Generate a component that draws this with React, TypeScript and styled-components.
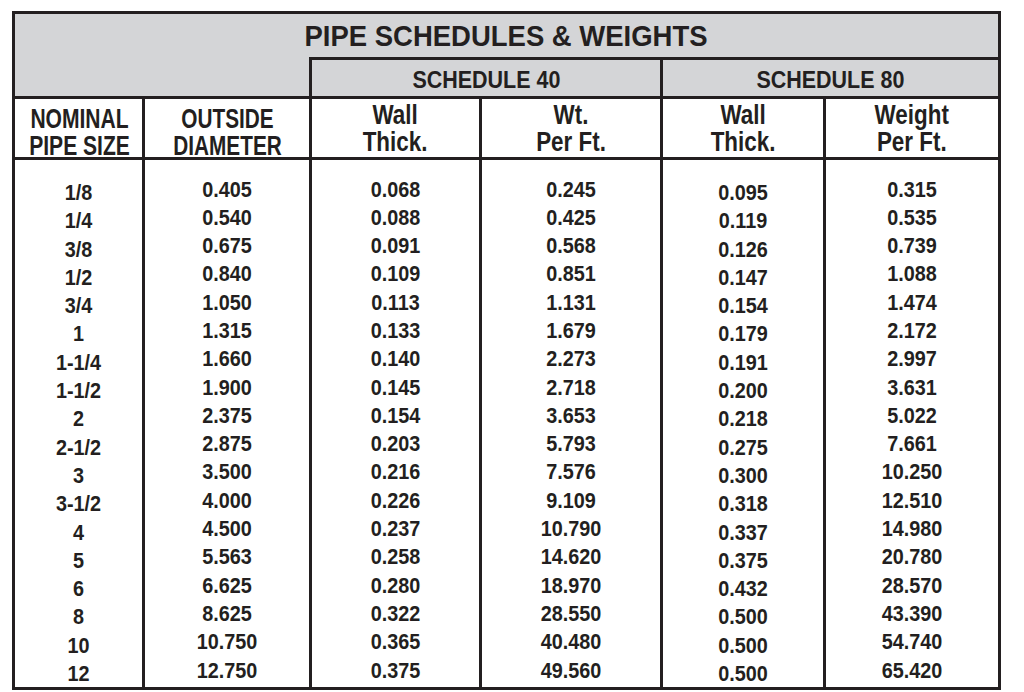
import React from "react";
import styled, { createGlobalStyle } from "styled-components";

const INK = "#231f20";
const GRAY = "#d4d5d7";

const Global = createGlobalStyle`
  html, body { margin: 0; padding: 0; background: #ffffff; }
  body { font-family: "Liberation Sans", Arial, sans-serif; color: ${INK}; }
`;

const Page = styled.div`
  padding: 11px 0 0 12px;
`;

const Table = styled.div`
  display: grid;
  grid-template-columns: 127px 164px 167px 178px 160px 172px;
  grid-template-rows: 43px 36px 58px 527px;
  gap: 3px;
  width: 983px;
  border: 3px solid ${INK};
  background: ${INK};
  font-weight: 700;
`;

const Squeeze = styled.span<{ $sx: number }>`
  display: inline-block;
  transform: scaleX(${(p) => p.$sx});
  white-space: nowrap;
`;

const TitleCell = styled.div`
  grid-column: 1 / -1;
  background: ${GRAY};
  text-align: center;
  font-size: 30px;
  line-height: 43px;
`;

const Spacer = styled.div`
  grid-column: 1 / 3;
  margin-top: -3px;
  background: ${GRAY};
`;

const ScheduleCell = styled.div`
  grid-column: span 2;
  background: ${GRAY};
  text-align: center;
  font-size: 24.5px;
  line-height: 32px;
  padding-top: 4px;
`;

const HeaderCell = styled.div<{ $top: number }>`
  background: #ffffff;
  text-align: center;
  font-size: 27px;
  line-height: 27px;
  padding-top: ${(p) => p.$top}px;
`;

const HeadLine = styled.span`
  display: block;
`;

const BodyCol = styled.div<{ $top: number }>`
  background: #ffffff;
  padding-top: ${(p) => p.$top}px;
  font-size: 22px;
  line-height: 28.3px;
`;

const ValueList = styled.div`
  display: flex;
  flex-direction: column;
  align-items: center;
  transform: scaleX(0.9);
`;

const columns: { head: [string, string]; sx: number; headTop: number; bodyTop: number; values: string[] }[] = [
  {
    head: ["NOMINAL", "PIPE SIZE"],
    sx: 0.78,
    headTop: 7,
    bodyTop: 19,
    values: ["1/8", "1/4", "3/8", "1/2", "3/4", "1", "1-1/4", "1-1/2", "2", "2-1/2", "3", "3-1/2", "4", "5", "6", "8", "10", "12"],
  },
  {
    head: ["OUTSIDE", "DIAMETER"],
    sx: 0.77,
    headTop: 7,
    bodyTop: 15.5,
    values: ["0.405", "0.540", "0.675", "0.840", "1.050", "1.315", "1.660", "1.900", "2.375", "2.875", "3.500", "4.000", "4.500", "5.563", "6.625", "8.625", "10.750", "12.750"],
  },
  {
    head: ["Wall", "Thick."],
    sx: 0.83,
    headTop: 3,
    bodyTop: 15.5,
    values: ["0.068", "0.088", "0.091", "0.109", "0.113", "0.133", "0.140", "0.145", "0.154", "0.203", "0.216", "0.226", "0.237", "0.258", "0.280", "0.322", "0.365", "0.375"],
  },
  {
    head: ["Wt.", "Per Ft."],
    sx: 0.83,
    headTop: 3,
    bodyTop: 15.5,
    values: ["0.245", "0.425", "0.568", "0.851", "1.131", "1.679", "2.273", "2.718", "3.653", "5.793", "7.576", "9.109", "10.790", "14.620", "18.970", "28.550", "40.480", "49.560"],
  },
  {
    head: ["Wall", "Thick."],
    sx: 0.83,
    headTop: 3,
    bodyTop: 19,
    values: ["0.095", "0.119", "0.126", "0.147", "0.154", "0.179", "0.191", "0.200", "0.218", "0.275", "0.300", "0.318", "0.337", "0.375", "0.432", "0.500", "0.500", "0.500"],
  },
  {
    head: ["Weight", "Per Ft."],
    sx: 0.83,
    headTop: 3,
    bodyTop: 15.5,
    values: ["0.315", "0.535", "0.739", "1.088", "1.474", "2.172", "2.997", "3.631", "5.022", "7.661", "10.250", "12.510", "14.980", "20.780", "28.570", "43.390", "54.740", "65.420"],
  },
];

export default function App() {
  return (
    <Page>
      <Global />
      <Table>
        <TitleCell>
          <Squeeze $sx={0.916}>PIPE SCHEDULES &amp; WEIGHTS</Squeeze>
        </TitleCell>
        <Spacer />
        <ScheduleCell>
          <Squeeze $sx={0.877}>SCHEDULE 40</Squeeze>
        </ScheduleCell>
        <ScheduleCell>
          <Squeeze $sx={0.877}>SCHEDULE 80</Squeeze>
        </ScheduleCell>
        {columns.map((c, i) => (
          <HeaderCell key={"h" + i} $top={c.headTop}>
            <Squeeze $sx={c.sx}>
              <HeadLine>{c.head[0]}</HeadLine>
              <HeadLine>{c.head[1]}</HeadLine>
            </Squeeze>
          </HeaderCell>
        ))}
        {columns.map((c, i) => (
          <BodyCol key={"b" + i} $top={c.bodyTop}>
            <ValueList>
              {c.values.map((v, j) => (
                <span key={j}>{v}</span>
              ))}
            </ValueList>
          </BodyCol>
        ))}
      </Table>
    </Page>
  );
}
